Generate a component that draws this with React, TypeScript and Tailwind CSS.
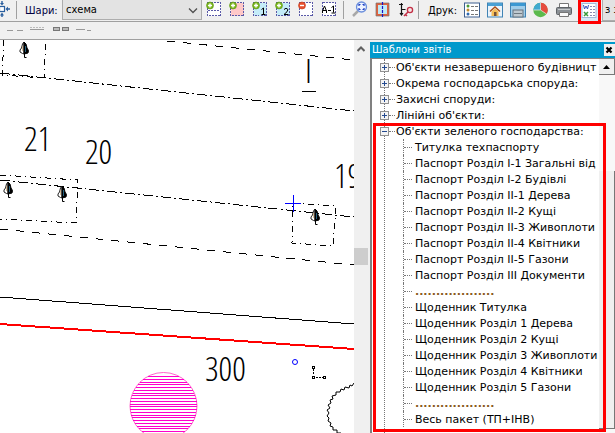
import type { ReactNode } from "react";
import clsx from "clsx";

interface ToolButtonProps {
  label: string;
  children: ReactNode;
}

interface ParentRowProps {
  label: string;
  open?: boolean;
}

const sections = [
  "Об'єкти незавершеного будівницт",
  "Окрема господарська споруда:",
  "Захисні споруди:",
  "Лінійні об'єкти:",
];

const dots = "...................";

const reports = [
  "Титулка техпаспорту",
  "Паспорт Розділ I-1 Загальні від",
  "Паспорт Розділ I-2 Будівлі",
  "Паспорт Розділ II-1 Дерева",
  "Паспорт Розділ II-2 Кущі",
  "Паспорт Розділ II-3 Живоплоти",
  "Паспорт Розділ II-4 Квітники",
  "Паспорт Розділ II-5 Газони",
  "Паспорт Розділ III Документи",
  dots,
  "Щоденник Титулка",
  "Щоденник Розділ 1 Дерева",
  "Щоденник Розділ 2 Кущі",
  "Щоденник Розділ 3 Живоплоти",
  "Щоденник Розділ 4 Квітники",
  "Щоденник Розділ 5 Газони",
  dots,
  "Весь пакет (ТП+ІНВ)",
];

const treeSymbols = [
  [24, 42],
  [8, 182],
  [62, 186],
  [315, 209],
];

function ToolButton({ label, children }: ToolButtonProps) {
  return (
    <button type="button" aria-label={label} className="h-4 w-4 shrink-0">
      <svg width="16" height="16" viewBox="0 0 16 16" className="block">
        {children}
      </svg>
    </button>
  );
}

function Separator() {
  return <div className="h-[18px] w-px shrink-0 bg-[#a0a0a0]" />;
}

function DashedFrame({ fill }: { fill: string }) {
  return (
    <rect
      x="1.5"
      y="1.5"
      width="13"
      height="13"
      fill={fill}
      stroke="#5a5aa8"
      strokeWidth="1"
      strokeDasharray="2 1"
      shapeRendering="crispEdges"
    />
  );
}

function Badge({ minus = false }: { minus?: boolean }) {
  return (
    <g>
      <circle
        cx="4"
        cy="4.5"
        r="3.5"
        fill={minus ? "#e8502c" : "#7cb81e"}
        stroke={minus ? "#c23b1c" : "#5a9410"}
        strokeWidth="0.6"
      />
      <path
        d={minus ? "M2 4.5h4" : "M2 4.5h4M4 2.5v4"}
        stroke="#fff"
        strokeWidth="1.4"
      />
    </g>
  );
}

function Toolbar() {
  return (
    <header className="flex h-[22px] shrink-0 items-start border-b border-[#a0a0a0] font-['DejaVu_Sans_Condensed','DejaVu_Sans',sans-serif] text-[11px] text-black">
      <button type="button" aria-label="Центрувати" className="mt-px h-4 w-3 shrink-0">
        <svg width="12" height="16" viewBox="0 0 12 16" className="block">
          <rect x="-0.5" y="5.5" width="5" height="5" fill="#fff" stroke="#2b5f9e" strokeWidth="1.2" />
          <path d="M2 4.5 0 2h4zM2 11.5l-2 3h4zM5.500 8 8 5.500v5z" fill="#2b5f9e" />
          <path d="M2 0v3M2 13v3M8 8h2" stroke="#2b5f9e" strokeWidth="1.400" />
        </svg>
      </button>
      <div className="ml-1 mt-px">
        <Separator />
      </div>
      <label htmlFor="layers" className="ml-2 mt-[3px] w-[37px] shrink-0 leading-4 text-[#000040]">
        Шари:
      </label>
      <div className="relative w-[140px] shrink-0">
        <select
          id="layers"
          className="block h-5 w-full appearance-none border border-t-0 border-[#adadad] bg-[#e3e3e3] pl-[3px] leading-4"
        >
          <option>схема</option>
        </select>
        <svg width="10" height="6" viewBox="0 0 10 6" className="pointer-events-none absolute right-1 top-2">
          <path d="M1 0.500 5 4.500 9 0.500" fill="none" stroke="#505050" strokeWidth="1.300" />
        </svg>
      </div>

      <div className="ml-1 mt-px flex shrink-0 gap-[7px]">
        <ToolButton label="Додати ділянку">
          <DashedFrame fill="#fff" />
          <path d="M2 9.500h12" stroke="#5a5aa8" strokeDasharray="2 1" />
          <Badge />
        </ToolButton>
        <ToolButton label="Додати зону">
          <DashedFrame fill="#ffc8c8" />
          <Badge />
        </ToolButton>
        <ToolButton label="Додати поверх 1">
          <DashedFrame fill="#c4ecf8" />
          <path d="M9.500 8.500 11.500 7v6M9.500 13.500h4" fill="none" stroke="#000" />
          <Badge />
        </ToolButton>
        <ToolButton label="Додати поверх 2">
          <DashedFrame fill="#c4ecf8" />
          <path d="M9 8.500q2-2.500 4 0 0 2-4 5h4.500" fill="none" stroke="#000" />
          <Badge />
        </ToolButton>
        <ToolButton label="Видалити">
          <DashedFrame fill="#fff" />
          <Badge minus />
        </ToolButton>
        <ToolButton label="Позначення">
          <DashedFrame fill="#fff" />
          <path d="M1.500 12v-2l2-5 2 5v2M1.500 9.500h4M7 9.500h3M10.500 6.500l2-1.500v6.500M10.500 12h4" fill="none" stroke="#000" />
        </ToolButton>
      </div>

      <div className="ml-1.5 mt-px">
        <Separator />
      </div>
      <div className="ml-2 mt-px flex shrink-0 gap-[7px]">
        <ToolButton label="Масштаб">
          <path d="M1 15 6 10" stroke="#a8a8a8" strokeWidth="2.500" />
          <circle cx="9.500" cy="6" r="5" fill="#eef3ff" stroke="#6b8fdc" strokeWidth="1.300" />
          <path d="M7 5V3.500h1.500M10.500 3.500H12V5M12 7v1.500h-1.500M8.500 8.500H7V7" fill="none" stroke="#1d3fc4" strokeWidth="1.200" />
        </ToolButton>
        <ToolButton label="План">
          <rect x="2" y="3" width="11" height="11" fill="#bfeaf5" stroke="#e2623c" strokeWidth="2" />
          <path d="M1 2h13v13H1z" fill="none" stroke="#777" strokeWidth="0.700" />
          <path d="M7.500 1v15" stroke="#1616c8" strokeWidth="1.200" strokeDasharray="3 1" />
        </ToolButton>
        <ToolButton label="Прив'язка">
          <path d="M1 3.500h4M3.500 2v12M3.500 8.500h4M2 12l1.500 2L5 12" fill="none" stroke="#111" strokeWidth="1.200" />
          <circle cx="12" cy="9" r="2.600" fill="#f7e4e4" stroke="#c22f45" strokeWidth="1.300" />
          <path d="M10 11 6 15M7 13l2 2" stroke="#c22f45" strokeWidth="1.500" />
        </ToolButton>
      </div>
      <div className="ml-1 mt-px">
        <Separator />
      </div>

      <span className="ml-[9px] mt-[3px] w-9 shrink-0 leading-4">Друк:</span>
      <div className="mt-0.5 flex shrink-0 gap-[7px]">
        <ToolButton label="Список">
          <rect x="0.500" y="1" width="15" height="14" fill="#fff" stroke="#3c5f90" />
          <path d="M7 4.500h7M7 8.500h7M7 12.500h7" stroke="#777" strokeDasharray="3 1" />
          <circle cx="4" cy="4" r="1.500" fill="#4a9a35" />
          <circle cx="4" cy="8" r="1.500" fill="#c28b2e" />
          <circle cx="4" cy="12" r="1.500" fill="#316ab0" />
        </ToolButton>
        <ToolButton label="Будинок">
          <rect x="0.500" y="1" width="15" height="14" fill="#eaf3fb" stroke="#4083b4" />
          <path d="M1 2.500h14" stroke="#4ba0d4" strokeWidth="3" />
          <path d="M3 9.500 8 5l5 4.500" fill="none" stroke="#ad4c16" strokeWidth="1.500" />
          <path d="M4.500 9.500 8 6.500l3.500 3V14h-7z" fill="#f4bc56" />
          <path d="M7 10h2.500v4H7z" fill="#765137" />
        </ToolButton>
        <ToolButton label="Вікно">
          <rect x="0.500" y="1" width="15" height="14" fill="#9fcdea" stroke="#4083b4" />
          <path d="M1 2.500h14" stroke="#3b98d2" strokeWidth="3" />
          <rect x="3" y="8" width="10" height="7" fill="#bfc9d0" stroke="#65717c" />
          <path d="M4 11.500h8" stroke="#6d7880" />
        </ToolButton>
        <ToolButton label="Діаграма">
          <circle cx="7.500" cy="8" r="7.200" fill="#5cba4d" />
          <path d="M7.500 8V.8A7.200 7.200 0 0 1 13.500 12z" fill="#e64c3e" />
          <path d="M7.500 8 .3 8A7.200 7.200 0 0 1 7.500 .8z" fill="#3fa9cf" />
          <path d="M7.500.8V8l6 4M7.500 8H.5" fill="none" stroke="#eee" strokeWidth="0.700" />
        </ToolButton>
        <ToolButton label="Принтер">
          <path d="M3.500 1.500h9V6h-9z" fill="#fff" stroke="#777" />
          <rect x="0.500" y="5.500" width="15" height="7" rx="1" fill="#8b9095" stroke="#5e6367" />
          <path d="M3.500 10.500h9v4h-9z" fill="#fafafa" stroke="#777" />
          <path d="M2 7.500h12" stroke="#c4c8ca" />
        </ToolButton>
      </div>
      {/* highlighted button, its frame hangs below the toolbar */}
      <div className="z-10 ml-1.5 h-6 w-[23px] shrink-0 border-[3px] border-t-2 border-[#f00] bg-[#d8e8f6]">
        <ToolButton label="Шаблони звітів">
          <rect x="1" y="1.500" width="14" height="14" fill="#fff" stroke="#a0b8d8" />
          <path d="M2.500 3l1 4L5 4l1.500 3 1-4" fill="none" stroke="#3355c0" />
          <path d="M3 10l4 4M7 10l-4 4" stroke="#3b9a3b" strokeWidth="1.500" />
          <path d="M9 4.500h5M9 7.500h5M9 10.500h5M9 13.500h5" stroke="#8a8ab0" strokeDasharray="2 1" />
        </ToolButton>
      </div>
      <select
        aria-label="Режим друку"
        className="ml-px h-[21px] min-w-0 flex-1 appearance-none border border-r-0 border-t-0 border-[#adadad] bg-[#e3e3e3] pl-0.5 leading-4"
      >
        <option>з з</option>
      </select>
    </header>
  );
}

// small CAD conifer, origin at the tip
function TreeSymbol({ x, y }: { x: number; y: number }) {
  return (
    <g transform={`translate(${x} ${y})`}>
      <path d="M0 0-1.500 2-2.500 6-4 8-4 10-1.500 11.500 0 12z" fill="#fff" stroke="#222" />
      <path d="M0 0 2 2 3 6 4.500 8.500 4 11 0 12z" fill="#000" />
      <path d="M-1.500 4v5" stroke="#c9a46a" strokeWidth="0.700" />
      <path d="M1.500 4v6" stroke="#3a9fd0" strokeWidth="0.600" />
      <path d="M0.500 10v5.500h2" fill="none" stroke="#000" />
    </g>
  );
}

function Drawing() {
  const stripes = Array.from({ length: 24 }, (_, i) => 376.5 + i * 2.75);
  return (
    <svg className="block h-full w-full" role="img" aria-label="Схема ділянки">
      <g transform="translate(0 -40)" fill="none" stroke="#000">
        <g shapeRendering="crispEdges">
          <path d="M167 41 354 60" strokeDasharray="8 8" />
          <path d="M0 229 354 265" strokeDasharray="8 8" />
          <g strokeDasharray="10 3 2 3">
            <path d="M0 73 354 111" />
            <path d="M0 180 354 217" />
          </g>
          <g strokeDasharray="6 4 1 4">
            <path d="M4 40 2 75 44 78 46 40" />
            <path d="M0 175 78 180 76 223 0 219" />
            <path d="M293 203 336 206 333 246 292 243z" />
          </g>
          <path d="M0 297 354 324" />
          <path d="M0 324 354 349" stroke="#f00" strokeWidth="2" />
          <path d="M285 203.500h16M293.500 195v17" stroke="#00f" />
          <path d="M302 91.500h14" />
          <path d="M313.500 369v6M316 377.500h7" strokeDasharray="2 1" />
          <path d="M312.500 366.500h2v2h-2zM312.500 376.500h2v2h-2zM323.500 376.500h2v2h-2z" />
        </g>

        <g stroke="#f0c">
          <circle cx="163.500" cy="406" r="33.500" stroke="#f6c" />
          <g shapeRendering="crispEdges">
            {stripes.map((y) => {
              const half = Math.sqrt(Math.max(0, 33.5 ** 2 - (y - 406) ** 2));
              return <path key={y} d={`M${163.5 - half} ${y}h${half * 2}`} />;
            })}
          </g>
        </g>

        <circle cx="295" cy="362" r="2.500" stroke="#00f" />
        <path d="M354 383l-2 3-2-1-1 3-4-1-1 3-3-1-1 3-4 0 0 3-4 1 1 3-3 1 1 3-3 2 2 3-3 2 2 3-2 3 2 2-1 3 3 2-1 3 3 1 0 3 4 0 0 3 4 0" />

        {treeSymbols.map(([x, y]) => (
          <TreeSymbol key={x} x={x} y={y} />
        ))}

        <g
          fill="#000"
          stroke="none"
          className="font-['Open_Sans_Condensed_Light','Open_Sans_Condensed','Roboto_Condensed','Liberation_Sans_Narrow',sans-serif] text-[34px] font-light"
        >
          <text x="24" y="151">21</text>
          <text x="85" y="164">20</text>
          <text x="334" y="188">19</text>
          <text x="205" y="381">300</text>
          <text x="305" y="83">I</text>
        </g>
      </g>
    </svg>
  );
}

function ParentRow({ label, open = false }: ParentRowProps) {
  return (
    <div className="flex h-4 items-center">
      <button
        type="button"
        aria-label={label}
        aria-expanded={open}
        className="z-10 ml-2 h-[9px] w-[9px] shrink-0"
      >
        <svg width="9" height="9" viewBox="0 0 9 9" className="block" shapeRendering="crispEdges">
          <rect x="0.500" y="0.500" width="8" height="8" fill="#f4f4f4" stroke="#919191" />
          <path d={open ? "M2 4.500h5" : "M2 4.500h5M4.500 2v5"} stroke="#244a90" />
        </svg>
      </button>
      <span className="w-1.5 shrink-0 border-t border-dotted border-[#777]" />
      <span className="ml-px whitespace-nowrap pt-0.5">{label}</span>
    </div>
  );
}

function ReportTree() {
  return (
    <ul className="relative min-w-0 flex-1 overflow-hidden font-['DejaVu_Sans',sans-serif] text-[11px] leading-4 text-black before:absolute before:inset-y-0 before:left-3 before:border-l before:border-dotted before:border-[#777]">
      {sections.map((label) => (
        <li key={label}>
          <ParentRow label={label} />
        </li>
      ))}
      <li>
        <ParentRow label="Об'єкти зеленого господарства:" open />
        <ul className="ml-[31px]">
          {reports.map((label, idx) => (
            <li
              key={idx}
              className="flex h-4 items-center border-l border-dotted border-[#777]"
            >
              <span className="w-2 shrink-0 border-t border-dotted border-[#777]" />
              <span
                className={clsx(
                  "ml-[3px] whitespace-nowrap pt-0.5",
                  label === dots && "font-bold text-[#8a5a20]"
                )}
              >
                {label}
              </span>
            </li>
          ))}
        </ul>
      </li>
    </ul>
  );
}

function ReportsPanel() {
  return (
    <aside className="relative flex w-[245px] shrink-0 flex-col pt-0.5">
      <div className="flex h-4 shrink-0 items-center justify-between bg-[#0099cc] pl-0.5 font-['DejaVu_Sans_Condensed','DejaVu_Sans',sans-serif] text-[11px] leading-4 text-white">
        <h2>Шаблони звітів</h2>
        <button type="button" aria-label="Закрити" className="h-3 w-[11px] bg-[#f0f0f0]">
          <svg width="11" height="12" viewBox="0 0 11 12" className="block">
            <path d="M2.500 3.500l5 5M7.500 3.500l-5 5" stroke="#000" strokeWidth="2.200" />
          </svg>
        </button>
      </div>
      <div className="flex min-h-0 flex-1 border-l-2 border-t border-[#808080] bg-white">
        <ReportTree />
        <div className="flex w-4 shrink-0 flex-col bg-[#f8f8f8]">
          <button
            type="button"
            aria-label="Вгору"
            className="flex h-4 shrink-0 items-center justify-center border-b border-r border-[#777] bg-[#f0f0f0]"
          >
            <svg width="7" height="4" viewBox="0 0 7 4">
              <path d="M3.500 0 7 4H0z" />
            </svg>
          </button>
          <div className="mt-24 mb-1 flex-1 border-b border-r border-[#777] bg-[#f0f0f0]" />
        </div>
      </div>
      <div className="pointer-events-none absolute bottom-px left-[3px] right-[9px] top-[83px] z-20 border-[3px] border-[#f00]" />
    </aside>
  );
}

export default function App() {
  return (
    <div className="flex h-screen flex-col overflow-hidden bg-[#f0f0f0]">
      <Toolbar />
      <div className="h-[18px] shrink-0 border-b border-[#a0a0a0] pl-[7px] pt-[5px]">
        <svg width="90" height="5" viewBox="0 0 90 5" className="block" shapeRendering="crispEdges">
          <path d="M0 3.500h6M10 3.500h6M23 2.500h14M69 2.500h9M80 3.500h4" stroke="#999" />
          <path d="M23 0.500h14" stroke="#bbb" strokeDasharray="2 1" />
          <path d="M46.500 0v3.500h6V0zM55.500 0v3.500h6V0z" fill="#bbb" stroke="#777" />
        </svg>
      </div>
      <main className="flex min-h-0 flex-1">
        <div className="min-w-0 flex-1 bg-white">
          <Drawing />
        </div>
        <div className="flex w-4 shrink-0 flex-col items-start">
          <button type="button" aria-label="Прокрутити вгору" className="flex h-[18px] w-3.5 shrink-0 items-center justify-center">
            <svg width="8" height="6" viewBox="0 0 8 6">
              <path d="M0.500 5 4 1.500 7.500 5" fill="none" stroke="#606060" strokeWidth="2" />
            </svg>
          </button>
          <div className="mt-[190px] h-[17px] w-3.5 bg-[#cdcdcd]" />
        </div>
        <ReportsPanel />
      </main>
    </div>
  );
}
